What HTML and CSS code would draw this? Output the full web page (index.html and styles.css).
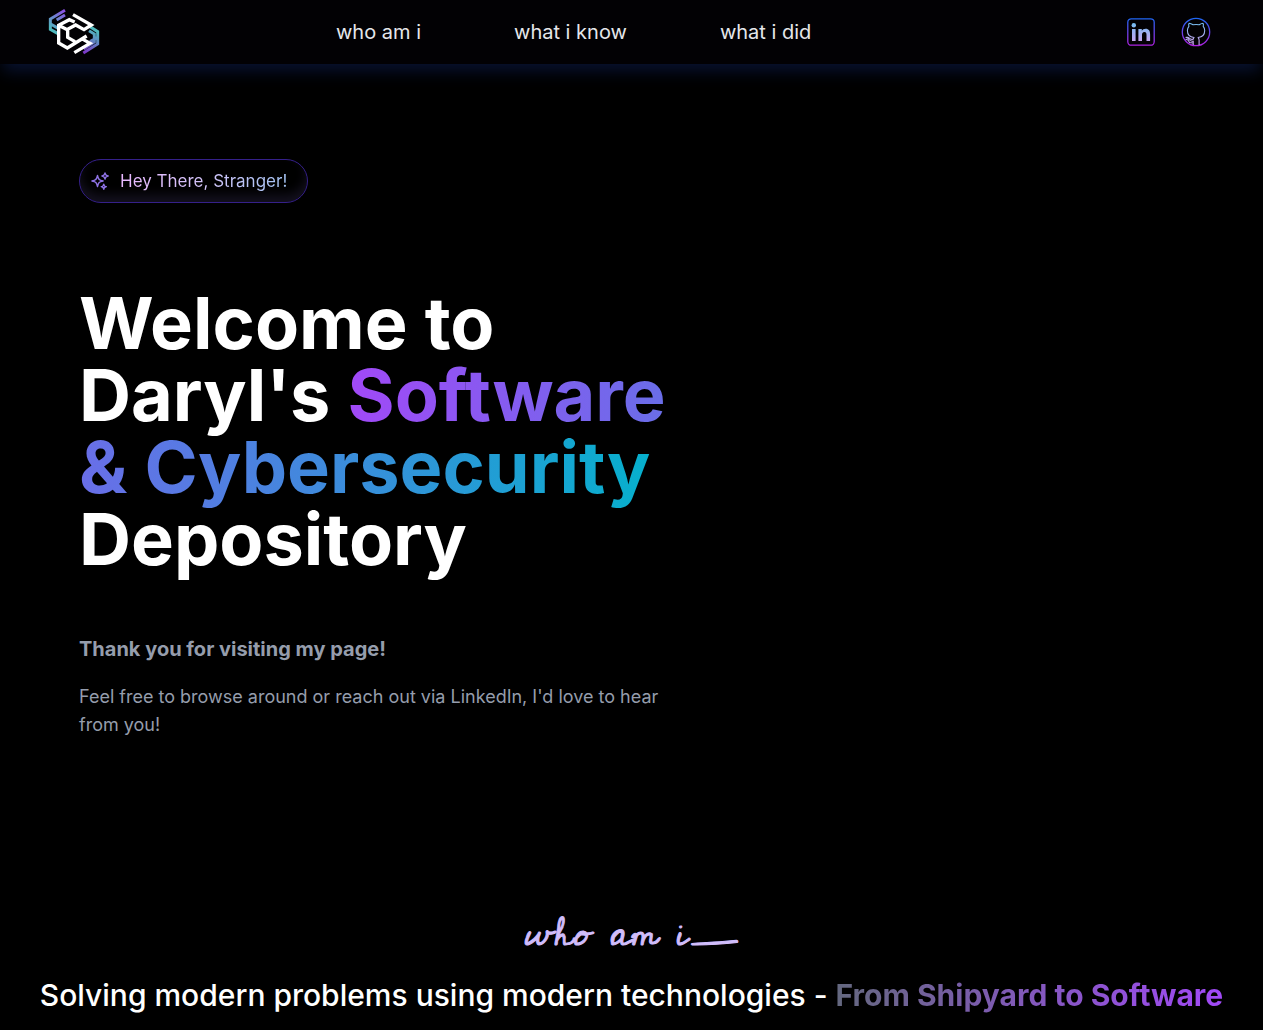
FILE: index.html
```html
<!DOCTYPE html>
<html lang="en">
<head>
<meta charset="utf-8">
<meta name="viewport" content="width=device-width, initial-scale=1">
<title>Daryl's Software &amp; Cybersecurity Depository</title>
<link rel="stylesheet" href="styles.css">
</head>
<body>
<header class="topbar">
  <a class="brand" href="#top" aria-label="Home">
    <svg width="52" height="48" viewBox="24 24 156 144" fill="none" stroke-width="9">
      <defs>
        <linearGradient id="left" x1="75" y1="30" x2="30" y2="85" gradientUnits="userSpaceOnUse"><stop offset="0" stop-color="#8e4ce6"/><stop offset="1" stop-color="#4fb9bd"/></linearGradient>
        <linearGradient id="right" x1="172" y1="95" x2="135" y2="160" gradientUnits="userSpaceOnUse"><stop offset="0" stop-color="#4fb9bd"/><stop offset="1" stop-color="#7d35c9"/></linearGradient>
      </defs>
      <path d="M75 31L31 57V88L54 101M75 45L50 60M32 72L56 86" stroke="url(#left)"/>
      <path d="M147 78L173 95V132L130 159M147 92L163 102V126L131 147M173 112L150 125" stroke="url(#right)"/>
      <path d="M99 44L154 75L132 89L107 75L83 88V112L105 125M104 66L88 59L56 76V129L82 144L140 108M60 78L82 89M125 116L150 130L103 158" stroke="#fff" stroke-width="10"/>
    </svg>
  </a>
  <nav class="menu" aria-label="Main">
    <a href="#about">who am i</a>
    <a href="#skills">what i know</a>
    <a href="#projects">what i did</a>
  </nav>
  <div class="social">
    <a href="#linkedin" aria-label="LinkedIn">
      <svg width="30" height="30" viewBox="0 0 30 30" fill="none">
        <defs>
          <linearGradient id="frame" x1="0" y1="0" x2="0" y2="30" gradientUnits="userSpaceOnUse"><stop stop-color="#1769f5"/><stop offset="1" stop-color="#b51ee0"/></linearGradient>
          <linearGradient id="mark" x1="0" y1="5" x2="0" y2="25" gradientUnits="userSpaceOnUse"><stop stop-color="#6fbff2"/><stop offset="1" stop-color="#c8a5f0"/></linearGradient>
        </defs>
        <rect x="1.8" y="1.8" width="26.4" height="26.4" rx="3.5" stroke="url(#frame)" stroke-width="1.3"/>
        <circle cx="7.8" cy="8.3" r="2.2" fill="url(#mark)"/>
        <path d="M6 12H9.6V24H6ZM12.4 12H15.8V13.7C16.6 12.4 17.8 11.7 19.6 11.7C23 11.7 24.1 14 24.1 17.2V24H20.5V18C20.5 16.2 20.2 14.9 18.4 14.9C16.6 14.9 16 16.2 16 18V24H12.4Z" fill="url(#mark)"/>
      </svg>
    </a>
    <a href="#github" aria-label="GitHub">
      <svg width="30" height="30" viewBox="0 0 30 30" fill="none">
        <circle cx="15" cy="15" r="13.7" stroke="url(#frame)" stroke-width="1.3"/>
        <path d="M12.2 28V24.1C9 24.8 8.2 22.7 7 21.2L5 20.4L6.8 20.2C9 20.8 9 23 12.2 22.3C12.4 21.3 12.7 20.8 13 20.5C8.8 20 6.4 17.8 6.4 13.4C6.4 11.7 7 10.4 7.9 9.3C7.5 8 7.6 7 8.1 6.2C9.6 6.2 10.9 7 12.1 7.8C14 7.4 16.2 7.4 18 7.8C19.3 7 20.5 6.2 22 6.2C22.5 7 22.6 8 22.2 9.3C23.1 10.4 23.7 11.7 23.7 13.4C23.7 17.8 21.3 20 17.1 20.5C17.8 21.2 18.1 22.1 18.1 23.3V28M4.5 22.2L7 23L8.5 25.5L11.8 26" stroke="url(#mark)" stroke-width="1.1" stroke-linejoin="round"/>
      </svg>
    </a>
  </div>
</header>
<main id="top">
  <section class="hero">
    <div class="badge">
      <svg width="20" height="20" viewBox="0 0 24 24" fill="none" stroke="#8f73e6" stroke-width="1.7" stroke-linejoin="round">
        <path d="M9.8 15.9L9 18.7L8.2 15.9A4.5 4.5 0 0 0 5.1 12.8L2.3 12L5.1 11.2A4.5 4.5 0 0 0 8.2 8.1L9 5.3L9.8 8.1A4.5 4.5 0 0 0 12.9 11.2L15.7 12L12.9 12.8A4.5 4.5 0 0 0 9.8 15.9ZM18.3 8.7L18 9.8L17.7 8.7A3.4 3.4 0 0 0 15.3 6.3L14.3 6L15.3 5.7A3.4 3.4 0 0 0 17.7 3.3L18 2.3L18.3 3.3A3.4 3.4 0 0 0 20.7 5.7L21.8 6L20.7 6.3A3.4 3.4 0 0 0 18.3 8.7ZM16.9 20.6L16.5 21.8L16.1 20.6A2.3 2.3 0 0 0 14.7 19.2L13.5 18.8L14.7 18.4A2.3 2.3 0 0 0 16.1 16.9L16.5 15.8L16.9 16.9A2.3 2.3 0 0 0 18.3 18.4L19.5 18.8L18.3 19.2A2.3 2.3 0 0 0 16.9 20.6Z"/>
      </svg>
      <span class="badge-text">Hey There, Stranger!</span>
    </div>
    <h1 class="title">Welcome to Daryl's <span class="title-accent">Software &amp; Cybersecurity</span> Depository</h1>
    <p class="thanks">Thank you for visiting my page!</p>
    <p class="intro">Feel free to browse around or reach out via LinkedIn, I'd love to hear from you!</p>
  </section>
  <section class="about" id="about">
    <p class="script">who am i_</p>
    <h2 class="tagline">Solving modern problems using modern technologies - <strong class="tagline-accent">From Shipyard to Software</strong></h2>
  </section>
</main>
</body>
</html>
```
FILE: styles.css
```css
* {
  box-sizing: border-box;
}

body {
  margin: 0;
  background: #000;
  color: #fff;
  font-family: Inter, "Liberation Sans", sans-serif;
}

h1, h2, p {
  margin: 0;
}

svg {
  display: block;
}

.topbar {
  display: grid;
  grid-template-columns: 288px 1fr auto;
  align-items: center;
  height: 64px;
  padding: 0 52px 0 48px;
  background: #020104;
  box-shadow: 0 10px 15px -3px rgba(20, 45, 120, 0.4);
}

.brand {
  justify-self: start;
}

.menu {
  display: flex;
  gap: 93px;
  font-size: 20px;
  line-height: 28px;
}

.menu a {
  color: #e5e7eb;
  text-decoration: none;
}

.social {
  display: flex;
  gap: 25px;
}

.hero {
  display: flex;
  flex-direction: column;
  align-items: flex-start;
  padding: 95px 80px 0 79px;
}

.badge {
  display: flex;
  align-items: center;
  gap: 10px;
  height: 44px;
  padding: 0 20px 0 10px;
  border: 1px solid #35208a;
  border-radius: 22px;
  box-shadow: inset 0 -7px 11px rgba(164, 143, 255, 0.12);
}

.badge-text {
  font-size: 17px;
  line-height: 24px;
  color: transparent;
  background: linear-gradient(90deg, #e9b8ff, #d2c3f8 50%, #a5c4f4);
  background-clip: text;
}

.title {
  max-width: 600px;
  margin-top: 84px;
  font-size: 72px;
  line-height: 72px;
  font-weight: 700;
}

.title-accent {
  color: transparent;
  background: linear-gradient(90deg, #a149f7, #06b0cd);
  background-clip: text;
}

.thanks {
  margin-top: 60px;
  color: #959dac;
  font-size: 20px;
  line-height: 28px;
  font-weight: 700;
}

.intro {
  max-width: 600px;
  margin-top: 20px;
  color: #959dac;
  font-size: 18px;
  line-height: 28px;
}

.about {
  display: flex;
  flex-direction: column;
  align-items: center;
  padding: 164px 20px 16px;
  text-align: center;
}

.script {
  color: #d0bdfb;
  font-family: "Cedarville Cursive", cursive;
  font-size: 40px;
  font-weight: 600;
  line-height: 60px;
  -webkit-text-stroke: 1px #d0bdfb;
}

.tagline {
  margin-top: 14px;
  font-size: 30px;
  line-height: 36px;
  font-weight: 500;
}

.tagline-accent {
  font-weight: 700;
  color: transparent;
  background: linear-gradient(90deg, #64687f, #a149f7);
  background-clip: text;
}
```
